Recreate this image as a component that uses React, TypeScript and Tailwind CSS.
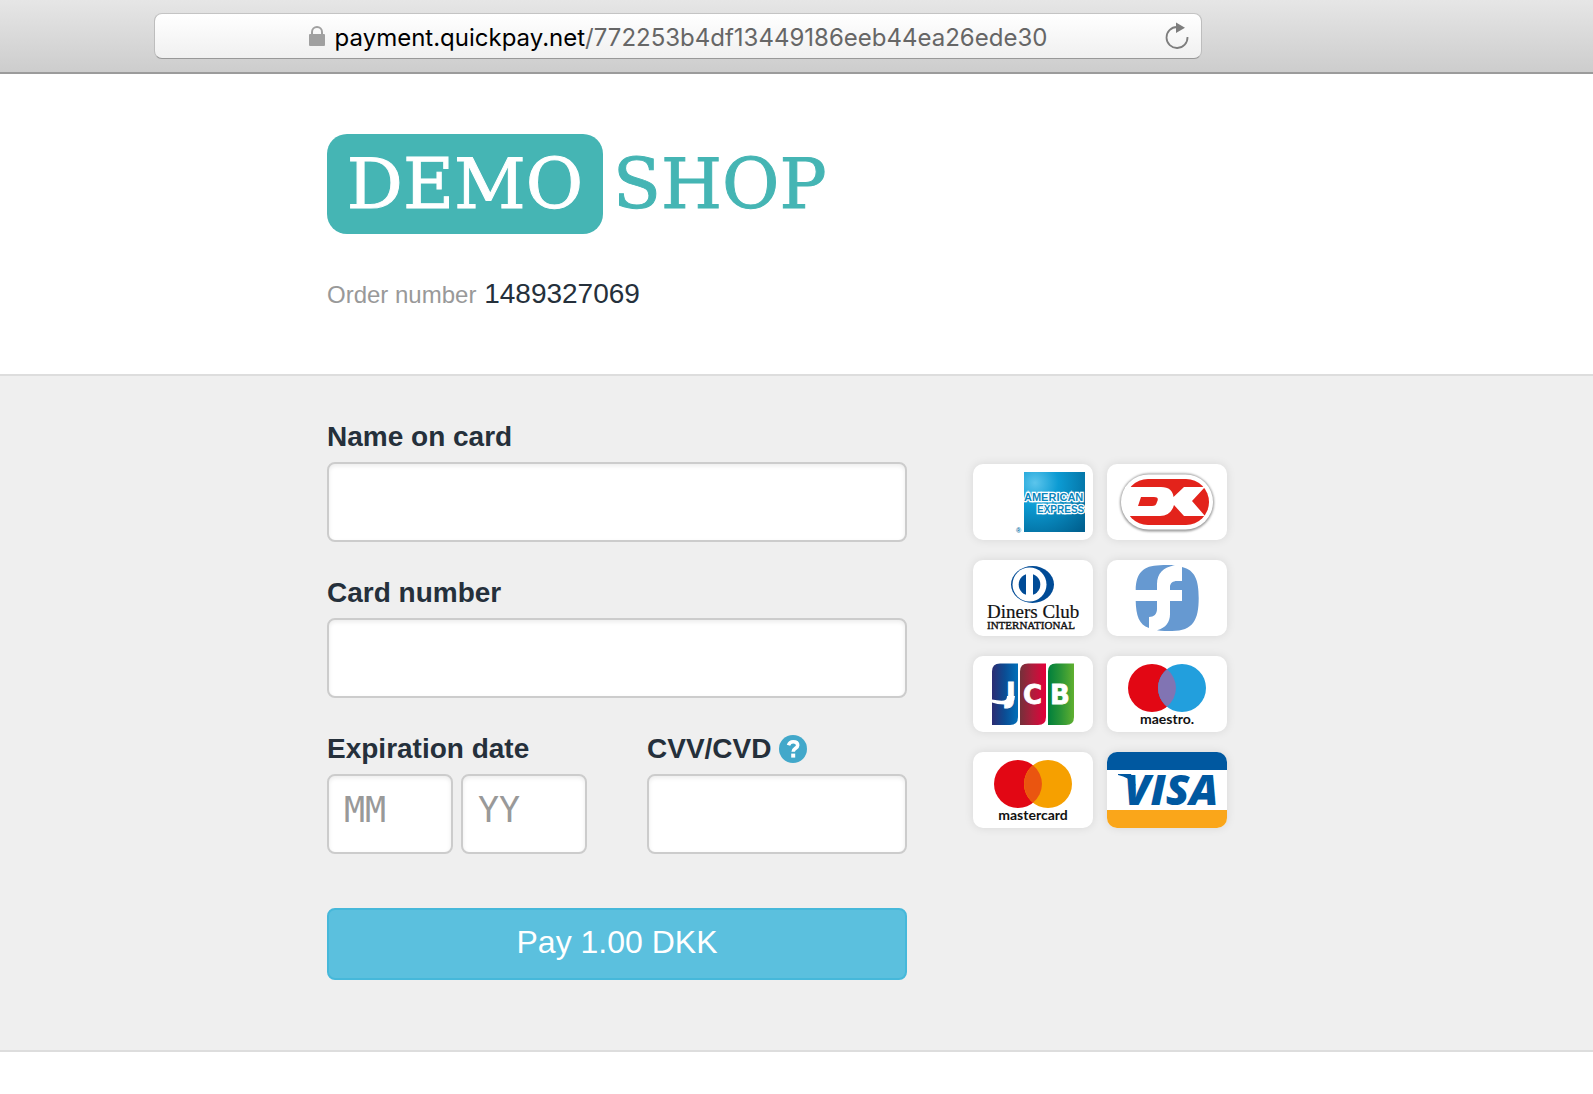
import React from "react";

const inputClass =
  "h-20 w-full min-w-0 rounded-lg border-2 border-[#cccccc] bg-white px-[15px] pb-2 font-['DejaVu_Sans_Mono',monospace] text-[35px] text-[#25303b] shadow-[inset_0_2px_4px_rgba(0,0,0,0.08)] outline-none placeholder:text-[#999999] placeholder:opacity-100 focus:border-[#66afe9]";

const labelClass = "text-[28px] leading-[42px] font-bold";

function LockIcon() {
  return (
    <svg className="h-5 w-4 shrink-0" viewBox="0 0 16 20" aria-hidden="true">
      <path d="M3 9V6a5 5 0 0 1 10 0v3" fill="none" stroke="#a0a0a0" strokeWidth="2" />
      <rect x="0" y="8" width="16" height="12" rx="1" fill="#a0a0a0" />
    </svg>
  );
}

function ReloadIcon() {
  return (
    <svg className="h-7 w-6" viewBox="0 0 24 28" aria-hidden="true">
      <path d="M12 5A10.500 10.500 0 1 0 22.500 15" fill="none" stroke="#7d7d7d" strokeWidth="1.8" />
      <path d="M11 0.500L20 5.700L11 10.900Z" fill="#7d7d7d" />
    </svg>
  );
}

function AddressBar() {
  return (
    <div className="border-b-2 border-[#9b9b9b] bg-linear-to-b from-[#e6e6e6] to-[#cdcdcd] pt-[13px] pr-[391px] pb-[13px] pl-[154px]">
      <div className="flex h-[46px] items-center rounded-lg border border-t-[#c4c4c4] border-r-[#bdbdbd] border-b-[#989898] border-l-[#bdbdbd] bg-linear-to-b from-white to-[#f0f0f0] pr-3">
        <div className="flex min-w-0 flex-1 items-baseline justify-center gap-[10px] pt-1 pl-9">
          <LockIcon />
          <p className="font-[Inter,sans-serif] text-2xl leading-10 text-[#666666]">
            <span className="text-black">payment.quickpay.net</span>/772253b4df13449186eeb44ea26ede30
          </p>
        </div>
        <button type="button" aria-label="Reload page" className="shrink-0">
          <ReloadIcon />
        </button>
      </div>
    </div>
  );
}

function ShopLogo() {
  return (
    <div className="flex h-[100px] items-center font-['DejaVu_Serif',serif] text-[70px] leading-none text-[#45b5b4] [-webkit-text-stroke:1px_currentColor]">
      <span className="flex h-full w-[276px] items-center justify-center rounded-[20px] bg-[#45b5b4] text-white">DEMO</span>
      <span className="ml-2.5">SHOP</span>
    </div>
  );
}

function AmexLogo() {
  return (
    <>
      <defs>
        <radialGradient id="amex" cx="0.18" cy="0.18" r="1.1">
          <stop offset="0" stopColor="#5cc5ec" />
          <stop offset="0.35" stopColor="#0c9bd3" />
          <stop offset="1" stopColor="#00608f" />
        </radialGradient>
        <clipPath id="amexClip">
          <rect x="51" y="8" width="61" height="61" />
        </clipPath>
      </defs>
      <rect x="51" y="8" width="61" height="60" fill="url(#amex)" />
      <g
        clipPath="url(#amexClip)"
        fontFamily="Liberation Sans, sans-serif"
        fontWeight="700"
        fill="#0a86bd"
        stroke="#ffffff"
        strokeWidth="2.4"
        paintOrder="stroke"
      >
        <text x="51" y="37" fontSize="11">AMERICAN</text>
        <text x="64" y="49" fontSize="10">EXPRESS</text>
      </g>
      <text x="43" y="69" fontFamily="Liberation Sans, sans-serif" fontSize="7" fontWeight="700" fill="#0a6fa5">®</text>
    </>
  );
}

function DankortLogo() {
  return (
    <>
      <defs>
        <filter id="dkShadow" x="-20%" y="-20%" width="140%" height="140%">
          <feGaussianBlur stdDeviation="1" />
        </filter>
        <clipPath id="dkClip">
          <rect x="18" y="15" width="84" height="46" rx="23" />
        </clipPath>
      </defs>
      <rect x="13" y="9.500" width="94" height="58" rx="29" fill="#9a9a9a" filter="url(#dkShadow)" />
      <rect x="14" y="10.500" width="92" height="55" rx="27.500" fill="#ffffff" />
      <g clipPath="url(#dkClip)">
        <rect x="18" y="15" width="84" height="46" fill="#e3231b" />
      </g>
      <path d="M18 23H54C62 23 66 27 66.500 33L77 23H98L85 37L98 52H77L67 41C65 48 60 52 53 52H18Z" fill="#ffffff" />
      <path d="M34 33H47C52 33 51 36 50 38C49 41 48 42 45 42H31Z" fill="#e3231b" />
    </>
  );
}

function DinersLogo() {
  return (
    <>
      <ellipse cx="59.500" cy="24.500" rx="21.500" ry="18.500" fill="#004b96" />
      <circle cx="56.500" cy="24.500" r="17" fill="#ffffff" />
      <circle cx="56.500" cy="24.500" r="10.800" fill="#004b96" />
      <rect x="53" y="12" width="7" height="25" fill="#ffffff" />
      <g fontFamily="Liberation Serif, serif" fill="#111111" stroke="#111111">
        <text x="14" y="58" fontSize="19" strokeWidth="0.2">Diners Club</text>
        <text x="14" y="69" fontSize="11" strokeWidth="0.4">INTERNATIONAL</text>
      </g>
    </>
  );
}

function ForbrugsforeningenLogo() {
  return (
    <g fill="#6699d1">
      <path d="M28.700 30C29 13 36 5.500 53 5.200C58 5 64 5 68 5.300C56 7 50 14 50 24V30Z" />
      <path d="M28.700 41H50V49C50 54 47 57 42 57V68C32 65 29 55 28.700 41Z" />
      <path d="M75 7C88 10 91.700 20 91.700 38C91.700 60 86 71 65 71C60 71 55 71 50 70.200C59 68 63 62 63 54V41H75V30H63V27C63 23 66 21 70 21H75Z" />
    </g>
  );
}

function JcbLogo() {
  return (
    <>
      <defs>
        <linearGradient id="jcbBlue">
          <stop offset="0" stopColor="#2c2c72" />
          <stop offset="0.5" stopColor="#0b4d94" />
          <stop offset="1" stopColor="#0070ba" />
        </linearGradient>
        <linearGradient id="jcbRed">
          <stop offset="0" stopColor="#74303a" />
          <stop offset="0.5" stopColor="#b01c3c" />
          <stop offset="1" stopColor="#e4003a" />
        </linearGradient>
        <linearGradient id="jcbGreen">
          <stop offset="0" stopColor="#007f3c" />
          <stop offset="0.5" stopColor="#2b9537" />
          <stop offset="1" stopColor="#60b030" />
        </linearGradient>
      </defs>
      <path d="M27 7.500H45V61Q45 69 37 69H19V15.500Q19 7.500 27 7.500Z" fill="url(#jcbBlue)" />
      <path d="M55 7.500H73V61Q73 69 65 69H47V15.500Q47 7.500 55 7.500Z" fill="url(#jcbRed)" />
      <path d="M83 7.500H101V61Q101 69 93 69H75V15.500Q75 7.500 83 7.500Z" fill="url(#jcbGreen)" />
      <path d="M19 43.500Q26 45 31 44.500Q34 44 34 40H42Q42 48.500 31 48.500Q24 48.500 19 46.500Z" fill="#ffffff" />
      <g fontFamily="DejaVu Sans, sans-serif" fontWeight="700" fontSize="26" fill="#ffffff" stroke="#ffffff" strokeWidth="0.8">
        <text x="33" y="46">J</text>
        <text x="50" y="48">C</text>
        <text x="77" y="48">B</text>
      </g>
    </>
  );
}

function TwoCircles({ right, overlap, name }: { right: string; overlap: string; name: string }) {
  return (
    <>
      <circle cx="45" cy="32" r="24" fill="#e20714" />
      <circle cx="75" cy="32" r="24" fill={right} />
      <path d="M60 13.300A24 24 0 0 1 60 50.700A24 24 0 0 1 60 13.300Z" fill={overlap} />
      <text x="60" y="68" textAnchor="middle" fontFamily="Lato, sans-serif" fontWeight="700" fontSize="14" fill="#111111">
        {name}
      </text>
    </>
  );
}

function VisaLogo() {
  return (
    <>
      <rect width="120" height="18" fill="#0058a0" />
      <rect y="58" width="120" height="18" fill="#faa61a" />
      <path d="M11 22H24L29 34Q22 25 11 23Z" fill="#0058a0" />
      <text x="17" y="53" fontFamily="Open Sans, sans-serif" fontWeight="800" fontStyle="italic" fontSize="43" fill="#0058a0">
        VISA
      </text>
    </>
  );
}

const cards: { name: string; logo: React.ReactNode }[] = [
  { name: "American Express", logo: <AmexLogo /> },
  { name: "Dankort", logo: <DankortLogo /> },
  { name: "Diners Club International", logo: <DinersLogo /> },
  { name: "Forbrugsforeningen", logo: <ForbrugsforeningenLogo /> },
  { name: "JCB", logo: <JcbLogo /> },
  { name: "Maestro", logo: <TwoCircles right="#229fdd" overlap="#8174b3" name="maestro." /> },
  { name: "Mastercard", logo: <TwoCircles right="#f6a000" overlap="#ea5510" name="mastercard" /> },
  { name: "Visa", logo: <VisaLogo /> },
];

function AcceptedCards() {
  return (
    <ul className="mt-12 grid shrink-0 grid-cols-2 content-start gap-x-3.5 gap-y-5">
      {cards.map((card) => (
        <li key={card.name} className="overflow-hidden rounded-[10px] bg-white shadow-[0_0_10px_rgba(0,0,0,0.1)]">
          <svg className="block h-[76px] w-[120px]" viewBox="0 0 120 76" role="img" aria-label={card.name}>
            {card.logo}
          </svg>
        </li>
      ))}
    </ul>
  );
}

function HelpIcon() {
  return (
    <svg className="size-7" viewBox="0 0 28 28" aria-hidden="true">
      <circle cx="14" cy="14" r="14" fill="#42a8ca" />
      <path d="M9.500 10.200C10.300 7.700 12 6.700 14.200 6.700C16.800 6.700 18.700 8 18.700 10.300C18.700 13.400 14.200 13.300 14.200 16.800" fill="none" stroke="#ffffff" strokeWidth="3.600" />
      <rect x="12.200" y="18.600" width="4" height="4" fill="#ffffff" />
    </svg>
  );
}

function PaymentForm() {
  return (
    <form className="flex max-w-[580px] flex-1 flex-col" onSubmit={(e) => e.preventDefault()}>
      <div className="mb-[30px] flex flex-col gap-1">
        <label htmlFor="name" className={labelClass}>Name on card</label>
        <input id="name" type="text" autoComplete="cc-name" className={inputClass} />
      </div>
      <div className="mb-[30px] flex flex-col gap-1">
        <label htmlFor="number" className={labelClass}>Card number</label>
        <input id="number" type="text" inputMode="numeric" autoComplete="cc-number" className={inputClass} />
      </div>
      <div className="grid grid-cols-2 gap-[60px]">
        <div className="flex flex-col gap-1">
          <label htmlFor="month" className={labelClass}>Expiration date</label>
          <div className="grid grid-cols-2 gap-2">
            <input id="month" type="text" inputMode="numeric" placeholder="MM" maxLength={2} className={inputClass} />
            <input type="text" inputMode="numeric" aria-label="Expiration year" placeholder="YY" maxLength={2} className={inputClass} />
          </div>
        </div>
        <div className="flex flex-col gap-1">
          <div className="flex items-center gap-2">
            <label htmlFor="cvv" className={labelClass}>CVV/CVD</label>
            <button type="button" aria-label="What is CVV/CVD?">
              <HelpIcon />
            </button>
          </div>
          <input id="cvv" type="text" inputMode="numeric" maxLength={4} className={inputClass} />
        </div>
      </div>
      <button
        type="submit"
        className="mt-[54px] h-[72px] rounded-lg border-2 border-[#46b8da] bg-[#5bc0de] pb-1 text-[32px] leading-10 text-white hover:bg-[#31b0d5]"
      >
        Pay 1.00 DKK
      </button>
    </form>
  );
}

export default function App() {
  return (
    <div className="min-h-screen bg-white font-['Liberation_Sans',Arial,sans-serif] text-[#25303b]">
      <AddressBar />
      <header className="border-b-2 border-[#dddddd] pt-[60px] pb-[59px]">
        <div className="mx-auto max-w-[939px]">
          <ShopLogo />
          <p className="mt-10 text-[28px] leading-10">
            <span className="text-2xl leading-10 text-[#999999]">Order number</span> 1489327069
          </p>
        </div>
      </header>
      <main className="border-b-2 border-[#dddddd] bg-[#efefef] pt-10 pb-[70px]">
        <div className="mx-auto flex max-w-[939px] gap-[66px]">
          <PaymentForm />
          <AcceptedCards />
        </div>
      </main>
    </div>
  );
}
